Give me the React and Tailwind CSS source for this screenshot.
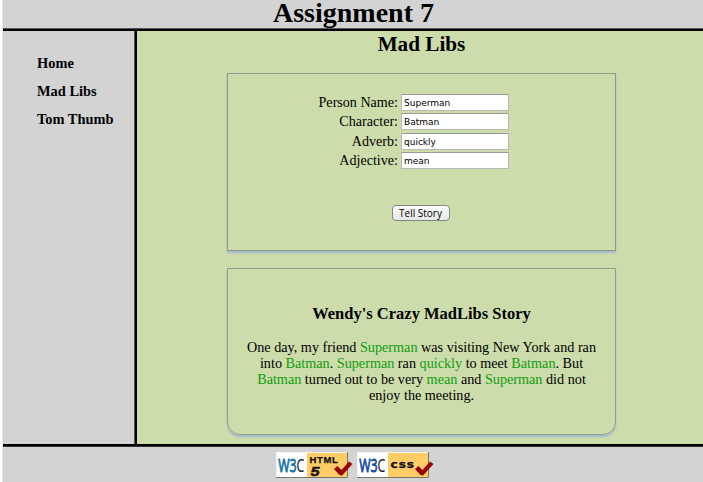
const fields = [
  { label: 'Person Name:', value: 'Superman' },
  { label: 'Character:', value: 'Batman' },
  { label: 'Adverb:', value: 'quickly' },
  { label: 'Adjective:', value: 'mean' },
];

function Word({ children }) {
  return <span className="text-[#119c11]">{children}</span>;
}

function Badge({ kind }) {
  const blue = kind === 'css' ? '#174da8' : '#1674ad';
  return (
    <svg width="77" height="27" viewBox="0 0 77 27" className="block shrink-0">
      <rect x="0" y="0" width="72" height="26" fill="#f4f4f0" />
      <rect x="1" y="1" width="30" height="24" fill="#fff" />
      <rect x="31" y="1" width="40" height="24" fill="#ffcc66" />
      <path d="M71.5 0V25.5H0" fill="none" stroke="#77776c" strokeWidth="1" />
      <text x="2.2" y="19.5" fontFamily="'Open Sans', sans-serif" fontSize="18" textLength="26" lengthAdjust="spacingAndGlyphs">
        <tspan fill={blue} stroke={blue} strokeWidth=".9">W3</tspan>
        <tspan fill="#222" stroke="#222" strokeWidth=".2">C</tspan>
      </text>
      {kind === 'css' ? (
        <text x="33.5" y="15.5" fontFamily="'DejaVu Sans', sans-serif" fontSize="10" fontWeight="700" fill="#111" stroke="#111" strokeWidth=".3" letterSpacing=".8" textLength="24.5" lengthAdjust="spacingAndGlyphs">css</text>
      ) : (
        <g fontFamily="'Liberation Sans', sans-serif" fontWeight="700" fill="#111">
          <text x="33.5" y="11.3" fontSize="9" letterSpacing=".6" stroke="#111" strokeWidth=".25" textLength="29" lengthAdjust="spacingAndGlyphs">HTML</text>
          <text x="34.5" y="23.5" fontSize="13.5" fontStyle="italic" stroke="#111" strokeWidth=".5" textLength="9" lengthAdjust="spacingAndGlyphs">5</text>
        </g>
      )}
      <path d="M58 17L61.5 14L65.5 18L73 9.5L76.5 12L66 23.5L63.5 23Z" fill="#990000" />
    </svg>
  );
}

export default function App() {
  return (
    <div className="h-[482px] w-[703px] overflow-hidden bg-white pl-[2px] font-['Liberation_Serif',serif] text-black">
      <div className="flex h-full flex-col border-l border-[#e5e5e5] bg-[#d3d3d3]">
        <header className="h-[28px] shrink-0">
          <h1 className="ml-[1px] text-center text-[28px] leading-[26px] font-bold">Assignment 7</h1>
        </header>
        <div className="h-[3px] shrink-0 border-t border-[#555] bg-black" />
        <div className="flex h-[413px] shrink-0">
          <nav className="flex w-[131px] shrink-0 flex-col gap-[8px] pt-[22px] pl-[34px] text-[14.4px] leading-[20px] font-bold">
            <a>Home</a>
            <a>Mad Libs</a>
            <a>Tom Thumb</a>
          </nav>
          <div className="w-[3px] shrink-0 border-l border-[#555] bg-black" />
          <main className="flex-1 bg-[#ccdcaa] pl-[90px]">
            <h2 className="h-[42px] w-[389px] text-center text-[21.2px] leading-[26px] font-bold">Mad Libs</h2>
            <form className="flex h-[178px] w-[389px] flex-col items-center border border-[#8c988a] pt-[20px] shadow-[0_2px_2px_#a4b7d1]">
              <div className="mr-[16px] flex h-[111px] w-[191px] flex-col gap-[2.3px]">
                {fields.map((f) => (
                  <label key={f.label} className="flex h-[17px] items-center justify-end gap-[3px] text-[14.1px] leading-[17px]">
                    <span className="whitespace-nowrap">{f.label}</span>
                    <input
                      className="h-[17px] w-[108px] border border-t-[#999] border-r-[#b8b8b8] border-b-[#b8b8b8] border-l-[#b8b8b8] bg-white px-[2px] pt-[1px] font-['DejaVu_Sans',sans-serif] text-[9px] leading-[14px]"
                      defaultValue={f.value}
                    />
                  </label>
                ))}
              </div>
              <button type="button" className="mr-[2px] h-[16px] w-[58px] rounded-[4px] border border-[#858585] bg-linear-to-b from-white via-[#f0f0f0] to-[#e8e8e8] font-['Open_Sans',sans-serif] text-[10px] leading-[13px] whitespace-nowrap">
                Tell Story
              </button>
            </form>
            <section className="mt-[17px] h-[167px] w-[389px] rounded-b-[13px] border border-[#929b91] pt-[35px] text-center shadow-[0_2px_2px_#a4b7d1]">
              <h3 className="text-[16.5px] leading-[20px] font-bold">Wendy's Crazy MadLibs Story</h3>
              <p className="mt-[15px] text-[14.2px] leading-[16px] whitespace-nowrap">
                One day, my friend <Word>Superman</Word> was visiting New York and ran<br />
                into <Word>Batman</Word>. <Word>Superman</Word> ran <Word>quickly</Word> to meet <Word>Batman</Word>. But<br />
                <Word>Batman</Word> turned out to be very <Word>mean</Word> and <Word>Superman</Word> did not<br />
                enjoy the meeting.
              </p>
            </section>
          </main>
        </div>
        <div className="h-[3px] shrink-0 border-b border-[#333] bg-black" />
        <footer className="flex flex-1 gap-[4px] pt-[5px] pl-[273px]">
          <Badge kind="html" />
          <Badge kind="css" />
        </footer>
      </div>
    </div>
  );
}
